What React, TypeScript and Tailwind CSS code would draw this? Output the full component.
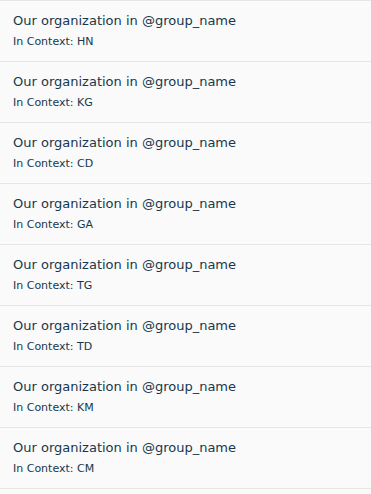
import React from 'react';

const contexts = ['HN', 'KG', 'CD', 'GA', 'TG', 'TD', 'KM', 'CM'];

const App = () => {
  return (
    <div className="w-[371px] h-[494px] overflow-hidden bg-[#fafafa]" style={{ fontFamily: '"DejaVu Sans", sans-serif' }}>
      <ul>
        {contexts.map((code) => (
          <li key={code} className="h-[61px] border-t border-[#e6e6e2] pl-[13px] pt-[11px] text-[#17384c]">
            <div className="text-[13px] leading-[18px]">Our organization in @group_name</div>
            <div className="text-[11px] leading-[14px] mt-[5px]">In Context: {code}</div>
          </li>
        ))}
        <li className="border-t border-[#e6e6e2]"></li>
      </ul>
    </div>
  );
};

export default App;
